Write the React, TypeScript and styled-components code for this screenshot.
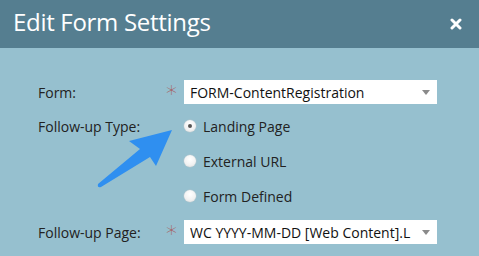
import React from 'react';
import styled, { createGlobalStyle } from 'styled-components';

const Global = createGlobalStyle`
  html, body {
    margin: 0;
    padding: 0;
    background: #96c0cf;
  }
  body {
    font-family: "Open Sans", "DejaVu Sans", sans-serif;
  }
`;

const Dialog = styled.div`
  position: relative;
  width: 479px;
  height: 256px;
  background: #96c0cf;
  overflow: hidden;
`;

const Header = styled.div`
  height: 48px;
  background: #557e90;
  display: flex;
  align-items: center;
  justify-content: space-between;
  padding: 0 17px 0 13px;
  box-sizing: border-box;
`;

const Title = styled.h1`
  margin: 0;
  font-size: 24px;
  font-weight: 400;
  color: #ffffff;
  letter-spacing: -0.3px;
  line-height: 1;
  padding-bottom: 4px;
`;

const Body = styled.div`
  padding: 31px 0 0 38px;
  display: flex;
  flex-direction: column;
  gap: 11px;
`;

const Row = styled.div`
  display: grid;
  grid-template-columns: 128px 18px 253px;
  height: 24px;
  align-items: center;
`;

const Label = styled.div`
  font-size: 14px;
  color: #222;
`;

const Required = styled.span`
  color: #a85a5a;
  font-size: 22px;
  line-height: 1;
  padding-top: 4px;
  font-family: "DejaVu Sans", sans-serif;
  font-weight: 300;
`;

const Select = styled.div`
  height: 24px;
  background: #ffffff;
  display: flex;
  align-items: center;
  padding: 0 7px 0 6px;
  box-sizing: border-box;
`;

const SelectText = styled.span`
  flex: 1;
  font-size: 14px;
  color: #111;
  white-space: nowrap;
  overflow: hidden;
`;

const Caret = styled.span`
  margin-left: 8px;
  width: 0;
  height: 0;
  border-left: 4.5px solid transparent;
  border-right: 4.5px solid transparent;
  border-top: 5px solid #8a8a8a;
  flex: none;
`;

const RadioRow = styled.label`
  display: flex;
  align-items: center;
  gap: 7px;
  font-size: 14px;
  color: #222;
`;

const RadioDot = styled.span<{ $checked?: boolean }>`
  width: 12px;
  height: 12px;
  border-radius: 50%;
  background: radial-gradient(circle at 50% 35%, #ffffff 0%, #f1f1f1 60%, #d6d6d6 100%);
  box-shadow: 0 0 0 0.5px #b9c7cd;
  display: flex;
  align-items: center;
  justify-content: center;
  &::after {
    content: '';
    display: ${(p) => (p.$checked ? 'block' : 'none')};
    width: 4px;
    height: 4px;
    border-radius: 50%;
    background: #555;
  }
`;

const Pointer = styled.svg`
  position: absolute;
  left: 0;
  top: 0;
  pointer-events: none;
`;

const Close = styled.svg`
  flex: none;
`;

export default function App() {
  return (
    <Dialog>
      <Global />
      <Header>
        <Title>Edit Form Settings</Title>
        <Close width="12" height="12" viewBox="0 0 12 12">
          <path d="M2 2 L10 10 M10 2 L2 10" stroke="#fff" strokeWidth="3" strokeLinecap="round" />
        </Close>
      </Header>
      <Body>
        <Row>
          <Label>Form:</Label>
          <Required>*</Required>
          <Select>
            <SelectText>FORM-ContentRegistration</SelectText>
            <Caret />
          </Select>
        </Row>
        <Row>
          <Label>Follow-up Type:</Label>
          <span />
          <RadioRow>
            <RadioDot $checked />
            Landing Page
          </RadioRow>
        </Row>
        <Row>
          <span />
          <span />
          <RadioRow>
            <RadioDot />
            External URL
          </RadioRow>
        </Row>
        <Row>
          <span />
          <span />
          <RadioRow>
            <RadioDot />
            Form Defined
          </RadioRow>
        </Row>
        <Row>
          <Label>Follow-up Page:</Label>
          <Required>*</Required>
          <Select>
            <SelectText>WC YYYY-MM-DD [Web Content].L</SelectText>
            <Caret />
          </Select>
        </Row>
      </Body>
      <Pointer width="479" height="256" viewBox="0 0 479 256">
        <path
          d="M172 130 L156 166 L150 157 L101 187 Q97 188 98 184 L140 149 L129 141 Z"
          fill="#2f8ff0"
        />
      </Pointer>
    </Dialog>
  );
}
